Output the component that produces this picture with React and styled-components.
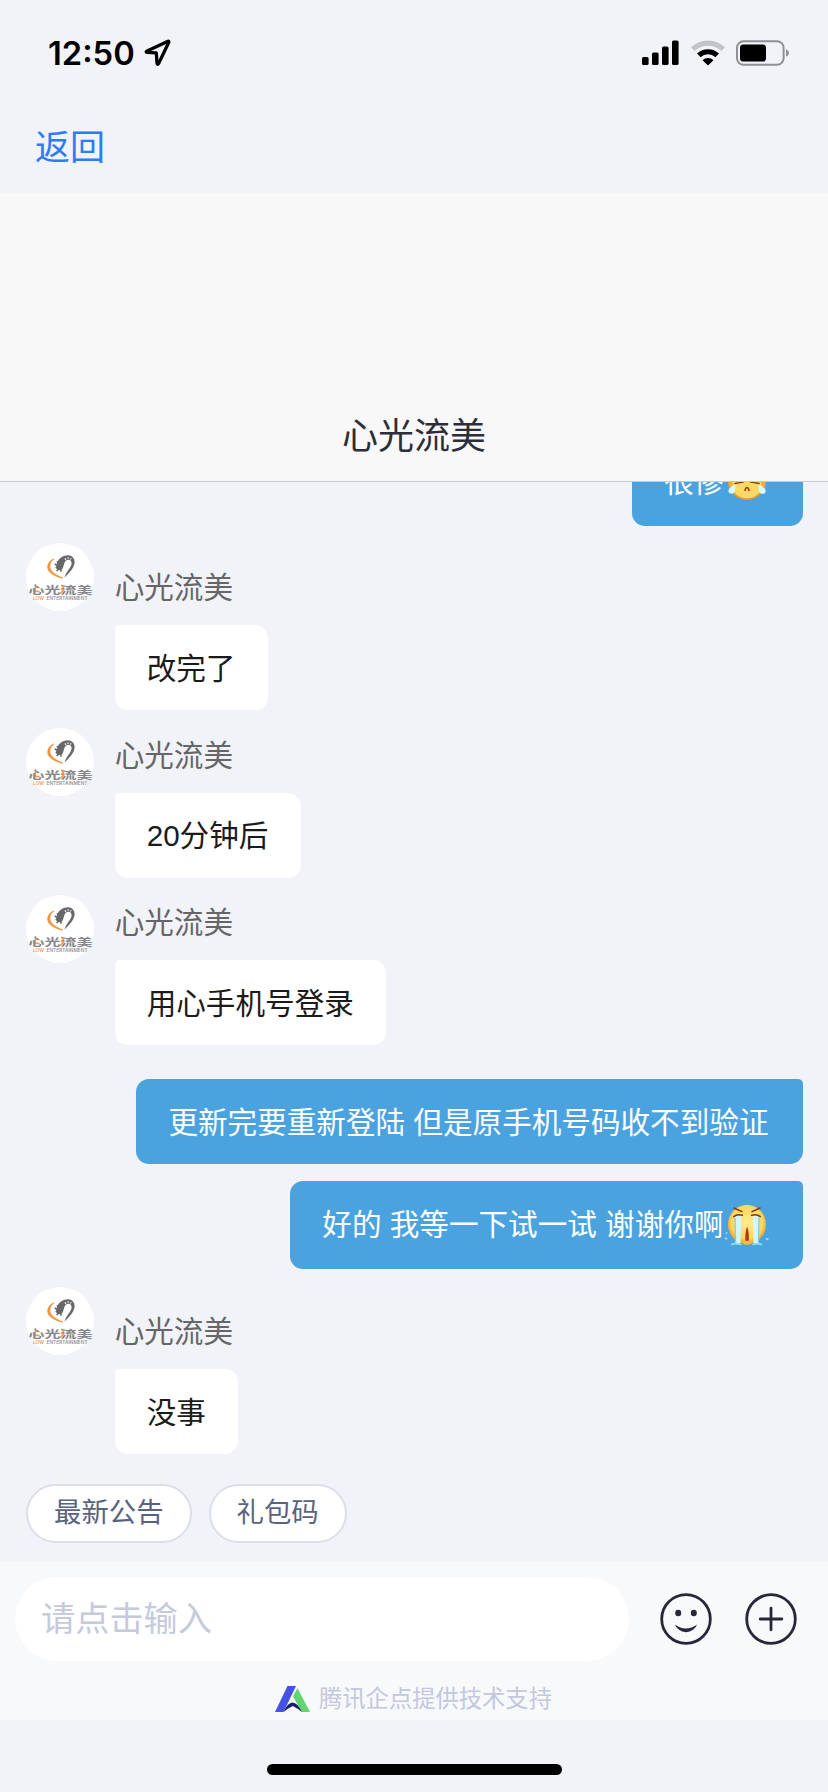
import styled, { createGlobalStyle, css } from 'styled-components';

const GlobalStyles = createGlobalStyle`
    * {
        box-sizing: border-box;
    }

    body {
        margin: 0;
        background-color: #f2f3f8;
        font-family: "Liberation Sans", "Noto Sans CJK SC", sans-serif;
    }
`;

const Screen = styled.div`
    width: 828px;
    height: 1792px;
    display: flex;
    flex-direction: column;
    overflow: hidden;
    background-color: #f2f3f8;
`;

const StatusBar = styled.div`
    flex: none;
    height: 106px;
    padding: 0 38px 0 48px;
    display: flex;
    align-items: center;
    justify-content: space-between;
`;

const StatusGroup = styled.div`
    display: flex;
    align-items: center;
    gap: ${props => props.$gap}px;
`;

const Time = styled.span`
    font-family: Inter, sans-serif;
    font-weight: 600;
    font-size: 32.7px;
    line-height: 40px;
    color: #000;
`;

const NavBar = styled.nav`
    flex: none;
    height: 87px;
    padding: 18px 35px 0;
`;

const BackLink = styled.a`
    display: block;
    font-size: 35px;
    line-height: 48px;
    color: #2f7bf6;
`;

const Header = styled.header`
    flex: none;
    height: 289px;
    padding-bottom: 18px;
    display: flex;
    align-items: flex-end;
    justify-content: center;
    background-color: #f8f8f8;
    border-bottom: 1px solid #c9cace;
`;

const Title = styled.h1`
    margin: 0;
    font-size: 36px;
    line-height: 52px;
    font-weight: 400;
    color: #2c2f3b;
`;

const Messages = styled.main`
    flex: 1;
    min-height: 0;
    padding: 0 25.5px 30px 26px;
    display: flex;
    flex-direction: column;
    justify-content: flex-end;
    overflow: hidden;
`;

const Row = styled.div`
    flex: none;
    display: flex;
    gap: 20.7px;
    margin-top: ${props => props.$gap || 17.4}px;
    justify-content: ${props => (props.$mine ? 'flex-end' : 'flex-start')};
`;

const Avatar = styled.svg`
    flex: none;
    width: 68px;
    height: 68px;
`;

const Name = styled.div`
    margin: ${props => (props.$offset ? 30.4 : 13)}px 0 22px;
    font-size: 29.6px;
    line-height: 30px;
    color: #666;
`;

const Bubble = styled.div`
    width: fit-content;
    height: 85px;
    padding: 2px 32.5px 0 32px;
    display: flex;
    align-items: center;
    font-size: 29.6px;
    line-height: 40px;
    white-space: pre;
    color: #1b1b1b;
    background-color: #fff;
    border-radius: 5px 13px 13px 13px;

    ${props => props.$mine && css`
        padding: 2px 34px 0 32px;
        color: #fff;
        background-color: #4aa3df;
        border-radius: 13px 5px 13px 13px;
    `}

    ${props => props.$emoji && css`
        height: 88px;
        padding: 0 33px 0 32px;
    `}
`;

const EmojiIcon = styled.svg`
    flex: none;
    width: 46px;
    height: 46px;
`;

const QuickActions = styled.div`
    flex: none;
    height: 78px;
    padding-left: 26px;
    display: flex;
    align-items: flex-start;
    gap: 17px;
`;

const Chip = styled.button`
    height: 59px;
    padding: 0 26px 1px;
    font-family: inherit;
    font-size: 27.4px;
    line-height: 36px;
    color: #59637f;
    background-color: #fff;
    border: 2px solid #dcdeea;
    border-radius: 30px;
`;

const Composer = styled.footer`
    flex: none;
    height: 158px;
    padding: 15px 31px 0 15px;
    background-color: #f8f9fb;
`;

const InputRow = styled.div`
    display: flex;
    align-items: center;
`;

const Input = styled.input`
    width: 614px;
    height: 84px;
    margin-right: 31px;
    padding: 1px 26px 0;
    border: 0;
    border-radius: 42px;
    outline: 0;
    font-family: inherit;
    font-size: 34.2px;
    background-color: #fff;

    &::placeholder {
        color: #c5cadc;
        opacity: 1;
    }
`;

const ActionButton = styled.button`
    flex: none;
    width: 52px;
    height: 52px;
    margin-right: ${props => props.$space || 0}px;
    padding: 0;
    border: 0;
    background: none;

    svg {
        display: block;
    }
`;

const Support = styled.div`
    height: 54px;
    margin: 11px 0 0 260px;
    display: flex;
    align-items: center;
    gap: 9px;
    font-size: 23.3px;
    line-height: 30px;
    color: #c3c7df;
`;

const HomeArea = styled.div`
    flex: none;
    height: 72px;
    padding-top: 44px;
`;

const HomeIndicator = styled.div`
    width: 295px;
    height: 11px;
    margin: 0 auto;
    background-color: #000;
    border-radius: 6px;
`;

const LocationIcon = () => (
    <svg width="27" height="28" viewBox="0 0 27 28" fill="none">
        <path
            d="M24 2.3 2.6 12.2Q1.6 13 3 13.3L12.3 13.8 13 24.2Q13.5 26.2 14.6 24.6L24.8 3.3Q25 2 24 2.3Z"
            stroke="#000"
            strokeWidth="3.3"
            strokeLinejoin="round"
        />
    </svg>
);

const SignalIcon = () => (
    <svg width="37" height="26" viewBox="0 0 37 26">
        <rect x="0" y="17" width="6.6" height="8" rx="1.6" />
        <rect x="10" y="12.5" width="6.6" height="12.5" rx="1.6" />
        <rect x="20" y="6.5" width="6.6" height="18.5" rx="1.6" />
        <rect x="30" y="0.6" width="6.6" height="24.4" rx="1.6" />
    </svg>
);

const WifiIcon = () => (
    <svg width="34" height="26" viewBox="0 0 34 26" fill="none">
        <path d="M1.8 9.2A21.8 21.8 0 0 1 32.2 9.2" stroke="#c2c3c7" strokeWidth="5.2" />
        <path d="M7.8 15.4A13.2 13.2 0 0 1 26.2 15.4" stroke="#000" strokeWidth="5" />
        <path d="M17 25.4 11.5 20.2A8.2 8.2 0 0 1 22.5 20.2Z" fill="#000" />
    </svg>
);

const BatteryIcon = () => (
    <svg width="54" height="26" viewBox="0 0 54 26">
        <rect x="1" y="1.2" width="46.6" height="23.6" rx="6.5" fill="none" stroke="#8f9094" strokeWidth="2" />
        <rect x="4" y="4.4" width="26" height="17.2" rx="3.4" />
        <path d="M50 9.2Q53 10.5 53 13T50 16.8Z" fill="#8f9094" />
    </svg>
);

const BrandAvatar = () => (
    <Avatar viewBox="0 0 68 68">
        <circle cx="34" cy="34" r="34" fill="#fff" />
        <path
            d="M28 15.8C22 18 20.2 24 23 28.2C26 32 33 34.8 37 35C31 32.6 26 29.8 24.4 26C23.2 22.4 24.5 18.6 28 15.8Z"
            fill="#ef9440"
            stroke="#ef9440"
            strokeWidth="0.7"
        />
        <path
            d="M31 22C31 16 37 12 42.5 12.3C48 13 50 18 47.6 23.6C45.4 28 41.4 31.6 38.5 34.6C40 28.8 45 25 45.6 20.8C46 17 42.5 15.4 39.8 17.8C37.6 20 38 23 36.6 25.6C34 28.4 31 26.6 29.4 24.5Z"
            fill="#66686b"
        />
        <path d="M28.6 21l4 1.6M31 18.4l2 3M30.6 27.8l3-2.4M35 28.6l-.2-3.4" stroke="#66686b" strokeWidth="1.7" />
        <path d="M39 15.4l.9 1.5M42 14.3l.1 1.6M45 15.2l-.7 1.3" stroke="#fff" strokeWidth="1.1" />
        <text
            x="2.6"
            y="50.6"
            fontFamily="Noto Sans CJK SC, sans-serif"
            fontSize="10.4"
            fontWeight="700"
            fill="#85868a"
            textLength="64"
            lengthAdjust="spacingAndGlyphs"
        >
            心光流美
        </text>
        <path d="M9.5 41v7.5h4M35.2 42l2 2-1.5 2 1.5 1.6-2.8 3" fill="none" stroke="#ef9440" strokeWidth="1.4" />
        <text fontFamily="Inter, sans-serif" fontSize="4.6" fontWeight="500" y="57">
            <tspan x="7" fill="#ef9440" textLength="11" lengthAdjust="spacingAndGlyphs">LOW</tspan>
            <tspan x="20.5" fill="#88898b" textLength="41" lengthAdjust="spacingAndGlyphs">ENTERTAINMENT</tspan>
        </text>
    </Avatar>
);

const SobEmoji = () => (
    <EmojiIcon viewBox="0 0 46 46">
        <defs>
            <radialGradient id="sobFace" cx="50%" cy="45%" r="55%">
                <stop offset="0" stopColor="#ffec91" />
                <stop offset="0.75" stopColor="#fbd75d" />
                <stop offset="1" stopColor="#e99b25" />
            </radialGradient>
        </defs>
        <ellipse cx="23" cy="22.5" rx="19" ry="19.8" fill="url(#sobFace)" />
        <path d="M11 14.5Q13 13 17.4 13.6L16.6 40Q16.4 43 11.4 42Z" fill="#d3f6fb" />
        <path d="M35 14.5Q33 13 28.6 13.6L29.4 40Q29.6 43 34.6 42Z" fill="#d3f6fb" />
        <path d="M11 16 11.6 40M35 16 34.4 40" stroke="#86cbdc" strokeWidth="1.3" />
        <path d="M17.4 38.5Q18 42.6 23 42.8Q28 42.6 28.6 38.5Z" fill="#f4bd42" />
        <path d="M23.1 24.5Q20.9 30 21.4 38.8H24.8Q25.3 30 23.1 24.5Z" fill="#b73514" />
        <path
            d="M10 6 18 9.6M9.7 14.6Q13 11.8 18.4 13.2M36 6 28 9.6M36.3 14.6Q33 11.8 27.6 13.2"
            fill="none"
            stroke="#843413"
            strokeWidth="1.5"
            strokeLinecap="round"
        />
        <path d="M7 42.6Q12 40.5 17.5 42.6M28.5 42.6Q33 40.5 38 42.6" stroke="#8be0ef" strokeWidth="1.8" fill="none" />
        <g fill="#90dff1">
            <circle cx="2.6" cy="31" r="0.9" />
            <circle cx="2" cy="36.5" r="1.2" />
            <circle cx="43.2" cy="37" r="1.3" />
        </g>
    </EmojiIcon>
);

const CryEmoji = () => (
    <EmojiIcon viewBox="0 0 46 46">
        <ellipse cx="23" cy="21.5" rx="18.4" ry="18.6" fill="#fbd863" stroke="#e69a2d" strokeWidth="1.6" />
        <path d="M4.5 19.5H10L8 27 5 29ZM41.5 19.5H36L38 27 41 29Z" fill="#f4a844" />
        <path
            d="M11.5 20.5 18 23.3 11 24.6M34.5 20.5 28 23.3 35 24.6"
            fill="none"
            stroke="#84400f"
            strokeWidth="1.5"
            strokeLinecap="round"
        />
        <path d="M21 32Q21.5 28.5 23 28.5T25.2 32" fill="none" stroke="#a5341a" strokeWidth="1.5" />
        <path d="M11.6 25.5Q11.8 34.5 8 34.8Q3 34.6 5 29.8Q7 28 11.6 25.5Z" fill="#d7fbff" />
        <path d="M34.4 25.5Q34.2 34.5 38 34.8Q43 34.6 41 29.8Q39 28 34.4 25.5Z" fill="#d7fbff" />
    </EmojiIcon>
);

const SmileIcon = () => (
    <svg width="52" height="52" viewBox="0 0 52 52">
        <circle cx="26" cy="26" r="24.3" fill="none" stroke="#24283a" strokeWidth="2.8" />
        <ellipse cx="18.2" cy="20" rx="3" ry="3.3" fill="#24283a" />
        <ellipse cx="33.8" cy="20" rx="3" ry="3.3" fill="#24283a" />
        <path d="M15 31.4Q20 35.4 26 35.4T37 31.4Q36.5 34 33 36.8Q30 39.2 26 39.2T19 36.8Q15.5 34 15 31.4Z" fill="#24283a" />
    </svg>
);

const PlusIcon = () => (
    <svg width="52" height="52" viewBox="0 0 52 52" fill="none" stroke="#24283a" strokeWidth="2.8">
        <circle cx="26" cy="26" r="24.3" />
        <path d="M26 15.2V36.8M15.2 26H36.8" strokeLinecap="round" />
    </svg>
);

const SupportLogo = () => (
    <svg width="35" height="26" viewBox="0 0 35 26">
        <path d="M0 26 12.5 0H21L8.5 26Z" fill="#4652e6" />
        <path d="M18 10.2 22.5 2.2 35 26H26.5Z" fill="#62d56c" />
        <path d="M8.5 26Q12.5 16.5 17.5 16.4Q22.5 16.5 27 26Q22 22 17.8 20Q13 22.2 8.5 26Z" fill="#171d68" />
    </svg>
);

const emojis = {
    sob: SobEmoji,
    cry: CryEmoji,
};

const messages = [
    { id: 1, mine: true, text: '很惨', emoji: 'cry' },
    { id: 2, text: '改完了', offset: true },
    { id: 3, text: '20分钟后' },
    { id: 4, text: '用心手机号登录' },
    { id: 5, mine: true, text: '更新完要重新登陆 但是原手机号码收不到验证', gap: 34 },
    { id: 6, mine: true, text: '好的 我等一下试一试 谢谢你啊', emoji: 'sob', gap: 17 },
    { id: 7, text: '没事', offset: true },
];

const Message = ({ message }) => {
    const Emoji = emojis[message.emoji];

    if (message.mine) {
        return (
            <Row $mine $gap={message.gap}>
                <Bubble $mine $emoji={message.emoji}>
                    {message.text}
                    {Emoji && <Emoji />}
                </Bubble>
            </Row>
        );
    }

    return (
        <Row>
            <BrandAvatar />
            <div>
                <Name $offset={message.offset}>心光流美</Name>
                <Bubble>{message.text}</Bubble>
            </div>
        </Row>
    );
};

export default function App() {
    return (
        <Screen>
            <GlobalStyles />
            <StatusBar>
                <StatusGroup $gap={9}>
                    <Time>12:50</Time>
                    <LocationIcon />
                </StatusGroup>
                <StatusGroup $gap={11.5}>
                    <SignalIcon />
                    <WifiIcon />
                    <BatteryIcon />
                </StatusGroup>
            </StatusBar>
            <NavBar>
                <BackLink>返回</BackLink>
            </NavBar>
            <Header>
                <Title>心光流美</Title>
            </Header>
            <Messages>
                {messages.map(message => (
                    <Message key={message.id} message={message} />
                ))}
            </Messages>
            <QuickActions>
                <Chip>最新公告</Chip>
                <Chip>礼包码</Chip>
            </QuickActions>
            <Composer>
                <InputRow>
                    <Input placeholder="请点击输入" />
                    <ActionButton $space={33}>
                        <SmileIcon />
                    </ActionButton>
                    <ActionButton>
                        <PlusIcon />
                    </ActionButton>
                </InputRow>
                <Support>
                    <SupportLogo />
                    腾讯企点提供技术支持
                </Support>
            </Composer>
            <HomeArea>
                <HomeIndicator />
            </HomeArea>
        </Screen>
    );
}
